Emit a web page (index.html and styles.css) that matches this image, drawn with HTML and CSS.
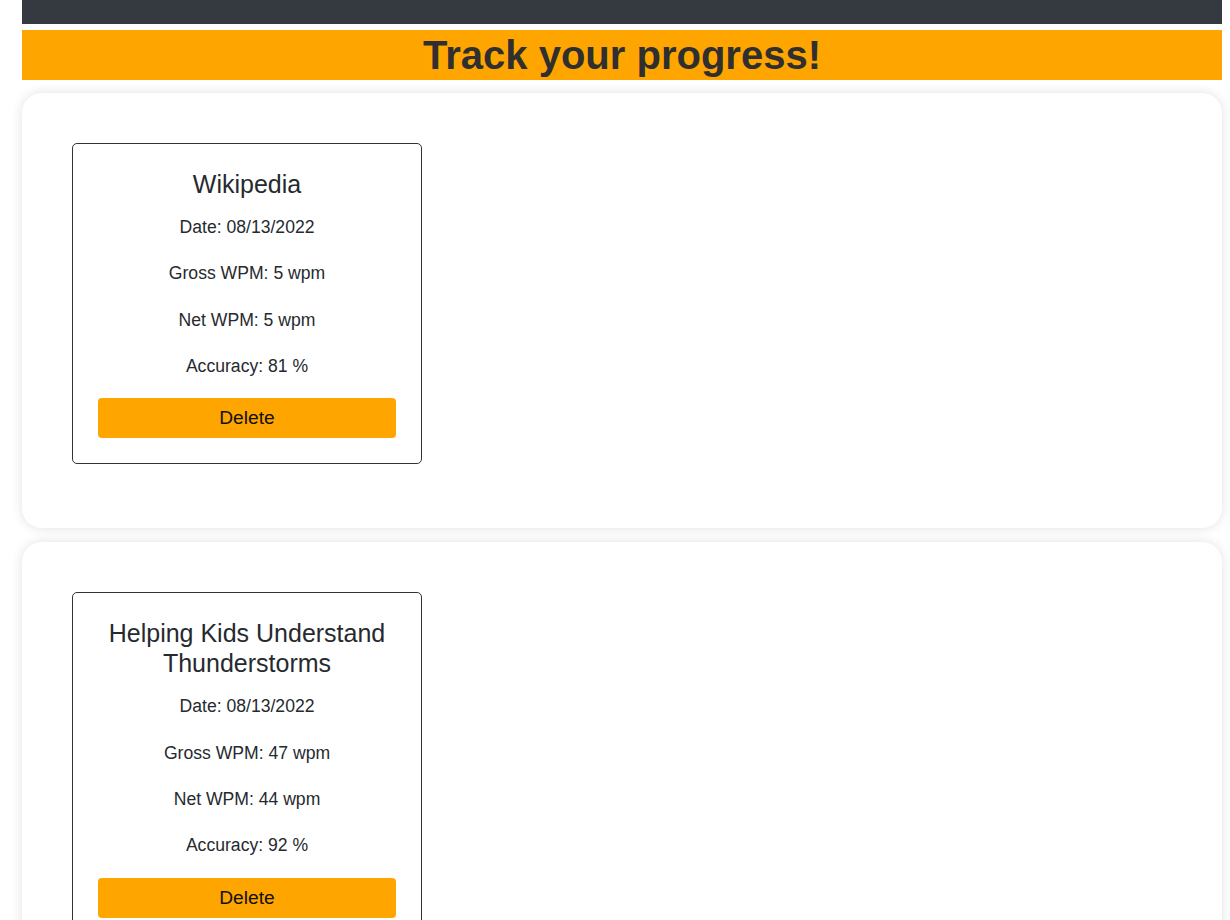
FILE: index.html
```html
<!DOCTYPE html>
<html lang="en">
<head>
<meta charset="utf-8">
<title>Track your progress!</title>
<link rel="stylesheet" href="styles.css">
</head>
<body>
<div class="page">
  <nav class="navbar"></nav>
  <h1 class="banner">Track your progress!</h1>

  <section class="panel">
    <div class="result-card">
      <h3 class="result-title">Wikipedia</h3>
      <p class="result-line">Date: 08/13/2022</p>
      <p class="result-line">Gross WPM: 5 wpm</p>
      <p class="result-line">Net WPM: 5 wpm</p>
      <p class="result-line">Accuracy: 81 %</p>
      <button class="delete-btn" type="button">Delete</button>
    </div>
  </section>

  <section class="panel">
    <div class="result-card">
      <h3 class="result-title">Helping Kids Understand Thunderstorms</h3>
      <p class="result-line">Date: 08/13/2022</p>
      <p class="result-line">Gross WPM: 47 wpm</p>
      <p class="result-line">Net WPM: 44 wpm</p>
      <p class="result-line">Accuracy: 92 %</p>
      <button class="delete-btn" type="button">Delete</button>
    </div>
  </section>
</div>
</body>
</html>
```

FILE: styles.css
```css
html, body {
  margin: 0;
  padding: 0;
  background: #ffffff;
}

body {
  font-family: "Liberation Sans", Arial, sans-serif;
  color: #262a2e;
}

.page {
  width: 1200px;
  margin-left: 22px;
}

.navbar {
  height: 24px;
  background: #343a40;
  margin-bottom: 6px;
}

.banner {
  margin: 0;
  height: 50px;
  line-height: 50px;
  background: #ffa500;
  color: #2f2f2f;
  font-size: 40px;
  font-weight: bold;
  text-align: center;
}

.panel {
  margin-top: 13px;
  background: #ffffff;
  border-radius: 20px;
  box-shadow: 0 0 12px rgba(0, 0, 0, 0.12);
  padding: 50px;
}

.panel + .panel {
  margin-top: 14px;
}

.result-card {
  width: 350px;
  border: 1px solid #333333;
  border-radius: 5px;
  padding: 25px;
  box-sizing: border-box;
  margin-bottom: 14px;
  text-align: center;
}

.result-title {
  margin: 0 0 14px 0;
  font-size: 25px;
  line-height: 30px;
  font-weight: normal;
  color: #262a2e;
}

.result-line {
  margin: 0 0 18.33px 0;
  font-size: 17.6px;
  line-height: 28px;
}

.delete-btn {
  display: block;
  width: 100%;
  height: 40px;
  margin-top: 4px;
  border: none;
  border-radius: 4px;
  background: #ffa500;
  color: #111111;
  font-family: "Liberation Sans", Arial, sans-serif;
  font-size: 19.2px;
  padding: 0;
}
```
